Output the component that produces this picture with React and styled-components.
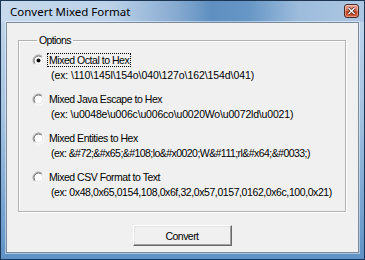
import React from "react";
import styled, { createGlobalStyle } from "styled-components";

const GlobalStyle = createGlobalStyle`
  html, body {
    margin: 0;
    padding: 0;
    width: 365px;
    height: 260px;
    overflow: hidden;
    background: #ffffff;
  }
  * { box-sizing: border-box; }
`;

const Window = styled.div`
  width: 365px;
  height: 260px;
  border: 1px solid #1b3552;
  background: linear-gradient(180deg, #c3d7ec 0%, #a3c2e1 45%, #5f92c6 100%);
  display: flex;
  flex-direction: column;
  font-family: "Liberation Sans", Arial, sans-serif;
`;

const TitleBar = styled.div`
  height: 21px;
  flex: none;
  display: flex;
  align-items: center;
  justify-content: space-between;
  padding: 0 5px 0 9px;
  background: linear-gradient(
    90deg,
    #c6d9ee 0%,
    #bcd2e9 30%,
    #88abd1 48%,
    #5e8fc0 58%,
    #6696c5 68%,
    #9dbcdc 82%,
    #acc7e3 100%
  );
`;

const Title = styled.span`
  font-family: "Noto Sans", "Open Sans", sans-serif;
  font-size: 11.5px;
  color: #000;
  line-height: 16px;
`;

const CloseButton = styled.div`
  width: 15px;
  height: 14px;
  align-self: flex-start;
  margin-top: 3px;
  border: 1px solid #4b2a26;
  border-radius: 3px;
  background: linear-gradient(180deg, #e9a593 0%, #d9775f 45%, #c4401f 55%, #d4603c 100%);
  display: flex;
  align-items: center;
  justify-content: center;
  box-shadow: inset 0 0 0 1px rgba(255, 255, 255, 0.35);
`;

const Content = styled.div`
  flex: 1;
  margin: 0 5px 6px 5px;
  background: #f0f0f0;
  border: 1px solid #7d8c9c;
  box-shadow: 0 0 0 1px rgba(255, 255, 255, 0.45);
  padding: 11px 12px 0 11px;
  display: flex;
  flex-direction: column;
  align-items: stretch;
`;

const Group = styled.fieldset`
  margin: 0;
  padding: 6px 0 12px 13px;
  border: 1px solid #b2b2b2;
  box-shadow: 1px 1px 0 #ffffff, inset 1px 1px 0 #ffffff;
  display: flex;
  flex-direction: column;
  gap: 10px;
`;

const Legend = styled.legend`
  margin-left: 5px;
  padding: 0 2px;
  font-size: 10.5px;
  line-height: 13px;
  letter-spacing: -0.6px;
  color: #000;
`;

const Option = styled.div`
  display: flex;
  flex-direction: column;
  gap: 1px;
`;

const OptionRow = styled.div`
  display: flex;
  align-items: center;
  height: 14px;
`;

const OptionLabel = styled.span`
  margin-left: 2px;
  padding: 0 2px;
  font-size: 10.5px;
  line-height: 14px;
  letter-spacing: -0.47px;
  color: #000;
  outline: ${(p) => (p.$focused ? "1px dotted #000" : "none")};
  outline-offset: -1px;
`;

const Example = styled.div`
  padding-left: 19px;
  font-size: 10.5px;
  line-height: 14px;
  letter-spacing: ${(p) => p.$tracking}px;
  color: #000;
  white-space: nowrap;
`;

const ButtonRow = styled.div`
  display: flex;
  justify-content: center;
  margin-top: 13px;
`;

const Button = styled.button`
  width: 99px;
  height: 21px;
  padding: 0;
  background: #f0f0f0;
  border: 1px solid;
  border-color: #ffffff #696969 #696969 #ffffff;
  box-shadow: inset -1px -1px 0 #a0a0a0, inset 1px 1px 0 #e3e3e3;
  font-family: "Liberation Sans", Arial, sans-serif;
  font-size: 10.5px;
  letter-spacing: -0.54px;
  color: #000;
`;

function Radio({ checked }) {
  const c = 6.5;
  const arc = (r, tl) => {
    const d = r * 0.7071;
    if (tl) {
      return `M ${c - d} ${c + d} A ${r} ${r} 0 0 1 ${c + d} ${c - d}`;
    }
    return `M ${c + d} ${c - d} A ${r} ${r} 0 0 1 ${c - d} ${c + d}`;
  };
  return (
    <svg width="13" height="13" viewBox="0 0 13 13">
      <circle cx={c} cy={c} r="5" fill="#ffffff" />
      <path d={arc(5.5, true)} fill="none" stroke="#a0a0a0" strokeWidth="1" />
      <path d={arc(4.5, true)} fill="none" stroke="#696969" strokeWidth="1" />
      <path d={arc(5.5, false)} fill="none" stroke="#ffffff" strokeWidth="1" />
      <path d={arc(4.5, false)} fill="none" stroke="#e3e3e3" strokeWidth="1" />
      {checked && <circle cx={c} cy={c} r="2" fill="#000" />}
    </svg>
  );
}

const options = [
  {
    label: "Mixed Octal to Hex",
    example: "(ex: \\110\\145l\\154o\\040\\127o\\162\\154d\\041)",
    tracking: -0.08,
  },
  {
    label: "Mixed Java Escape to Hex",
    example: "(ex: \\u0048e\\u006c\\u006co\\u0020Wo\\u0072ld\\u0021)",
    tracking: -0.18,
  },
  {
    label: "Mixed Entities to Hex",
    example: "(ex: &#72;&#x65;&#108;lo&#x0020;W&#111;rl&#x64;&#0033;)",
    tracking: -0.55,
  },
  {
    label: "Mixed CSV Format to Text",
    example: "(ex: 0x48,0x65,0154,108,0x6f,32,0x57,0157,0162,0x6c,100,0x21)",
    tracking: -0.41,
  },
];

export default function App() {
  return (
    <>
      <GlobalStyle />
      <Window>
        <TitleBar>
          <Title>Convert Mixed Format</Title>
          <CloseButton>
            <svg width="9" height="8" viewBox="0 0 9 8">
              <path d="M1.5 1 L7.5 7 M7.5 1 L1.5 7" stroke="#3a1a14" strokeWidth="2.6" />
              <path d="M1.5 1 L7.5 7 M7.5 1 L1.5 7" stroke="#ffffff" strokeWidth="1.4" />
            </svg>
          </CloseButton>
        </TitleBar>
        <Content>
          <Group>
            <Legend>Options</Legend>
            {options.map((o, i) => (
              <Option key={o.label}>
                <OptionRow>
                  <Radio checked={i === 0} />
                  <OptionLabel $focused={i === 0}>{o.label}</OptionLabel>
                </OptionRow>
                <Example $tracking={o.tracking}>{o.example}</Example>
              </Option>
            ))}
          </Group>
          <ButtonRow>
            <Button>Convert</Button>
          </ButtonRow>
        </Content>
      </Window>
    </>
  );
}
